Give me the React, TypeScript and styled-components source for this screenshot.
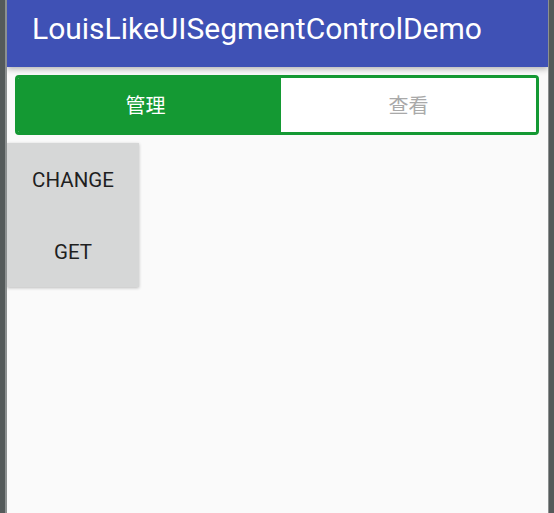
import React, { useState } from "react";
import styled, { createGlobalStyle } from "styled-components";

const Global = createGlobalStyle`
  html, body { margin: 0; padding: 0; background: #545a5a; }
  body { font-family: Roboto, "Noto Sans CJK SC", sans-serif; }
`;

const Frame = styled.div`
  width: 554px;
  height: 513px;
  display: flex;
  background: #545a5a;
  padding: 0 5px 0 5px;
  box-sizing: border-box;
`;

const Edge = styled.div<{ $w: number }>`
  width: ${(p) => p.$w}px;
  background: #8c9090;
  flex: none;
`;

const Screen = styled.div`
  flex: 1;
  background: #fafafa;
  display: flex;
  flex-direction: column;
  position: relative;
  overflow: hidden;
`;

const AppBar = styled.header`
  height: 67px;
  background: #3f51b5;
  display: flex;
  align-items: center;
  padding-left: 25px;
  padding-bottom: 11px;
  box-sizing: border-box;
  box-shadow: 0 2px 6px rgba(0, 0, 0, 0.3);
  position: relative;
  z-index: 1;
`;

const Title = styled.h1`
  margin: 0;
  color: #fff;
  font-family: Roboto, sans-serif;
  font-weight: 400;
  font-size: 30px;
`;

const Segment = styled.div`
  margin: 8px 9px 0 8px;
  height: 60px;
  border: 3px solid #149933;
  border-radius: 4px;
  display: flex;
  box-sizing: border-box;
  overflow: hidden;
`;

const SegItem = styled.button<{ $active: boolean; $first: boolean }>`
  flex: 1 1 0;
  border: none;
  border-left: ${(p) => (p.$first ? "none" : "4px solid #149933")};
  margin: 0;
  padding: ${(p) => (p.$first ? "0 4px 2px 0" : "0 0 2px 0")};
  background: ${(p) => (p.$active ? "#149933" : "#ffffff")};
  color: ${(p) => (p.$active ? "#ffffff" : "#a9a9a9")};
  font-family: "Noto Sans CJK SC", sans-serif;
  font-size: 20px;
  cursor: pointer;
`;

const Buttons = styled.div`
  margin-top: 8px;
  width: 132px;
  display: flex;
  flex-direction: column;
  box-shadow: 0 1px 3px rgba(0, 0, 0, 0.25);
`;

const ActionButton = styled.button`
  height: 72px;
  border: none;
  background: #d6d7d7;
  color: #1f1f1f;
  font-family: Roboto, sans-serif;
  font-size: 20.5px;
  padding: 2px 0 0 0;
  text-transform: uppercase;
  cursor: pointer;
`;

export default function App() {
  const [active, setActive] = useState(0);
  const items = ["管理", "查看"];
  return (
    <>
      <Global />
      <Frame>
        <Edge $w={2} />
        <Screen>
          <AppBar>
            <Title>LouisLikeUISegmentControlDemo</Title>
          </AppBar>
          <Segment>
            {items.map((t, i) => (
              <SegItem
                key={t}
                $first={i === 0}
                $active={active === i}
                onClick={() => setActive(i)}
              >
                {t}
              </SegItem>
            ))}
          </Segment>
          <Buttons>
            <ActionButton>Change</ActionButton>
            <ActionButton>Get</ActionButton>
          </Buttons>
        </Screen>
        <Edge $w={1} />
      </Frame>
    </>
  );
}
